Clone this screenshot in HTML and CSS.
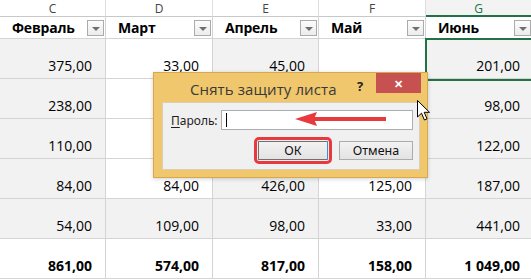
FILE: index.html
```html
<!DOCTYPE html>
<html lang="ru">
<head>
<meta charset="utf-8">
<title>Снять защиту листа</title>
<link rel="stylesheet" href="styles.css">
</head>
<body>
<div class="sheet">
  <div class="grid letters">
    <div class="cell">C</div>
    <div class="cell">D</div>
    <div class="cell">E</div>
    <div class="cell">F</div>
    <div class="cell sel">G</div>
  </div>
  <div class="grid head">
    <div class="cell"><span>Февраль</span><i class="filter"></i></div>
    <div class="cell"><span>Март</span><i class="filter"></i></div>
    <div class="cell"><span>Апрель</span><i class="filter"></i></div>
    <div class="cell"><span>Май</span><i class="filter"></i></div>
    <div class="cell"><span>Июнь</span><i class="filter"></i></div>
  </div>
  <div class="grid data">
    <div class="cell g">375,00</div><div class="cell">33,00</div><div class="cell g">45,00</div><div class="cell"></div><div class="cell g">201,00</div>
  </div>
  <div class="grid data">
    <div class="cell g">238,00</div><div class="cell"></div><div class="cell g"></div><div class="cell"></div><div class="cell g">98,00</div>
  </div>
  <div class="grid data">
    <div class="cell g">110,00</div><div class="cell"></div><div class="cell g"></div><div class="cell"></div><div class="cell g">122,00</div>
  </div>
  <div class="grid data">
    <div class="cell g">84,00</div><div class="cell">84,00</div><div class="cell g">426,00</div><div class="cell">125,00</div><div class="cell g">187,00</div>
  </div>
  <div class="grid data">
    <div class="cell g">54,00</div><div class="cell g">109,00</div><div class="cell g">98,00</div><div class="cell g">33,00</div><div class="cell g">441,00</div>
  </div>
  <div class="grid data total">
    <div class="cell">861,00</div><div class="cell">574,00</div><div class="cell">817,00</div><div class="cell">158,00</div><div class="cell">1 049,00</div>
  </div>

  <div class="selection"></div>

  <div class="dialog">
    <div class="titlebar">
      <span class="title">Снять защиту листа</span>
      <span class="help">?</span>
      <span class="close">✕</span>
    </div>
    <div class="panel">
      <div class="field">
        <label class="label"><u>П</u>ароль:</label>
        <div class="input"><i class="caret"></i></div>
      </div>
      <div class="buttons">
        <div class="btn ok">ОК</div>
        <div class="btn">Отмена</div>
      </div>
    </div>
  </div>

  <svg class="arrow" width="100" height="20" viewBox="0 0 100 20">
    <line x1="96" y1="10" x2="18" y2="10" stroke="#e8393f" stroke-width="4"/>
    <polygon points="5,10 27,3 24,10 27,17" fill="#e8393f"/>
  </svg>

  <svg class="cursor" width="14" height="22" viewBox="0 0 14 22">
    <path d="M0.5 0.5 L0.5 17 L4.5 13.2 L7.4 20 L10 18.9 L7.2 12.3 L12.5 12.3 Z" fill="#fff" stroke="#000" stroke-width="1" stroke-linejoin="miter"/>
  </svg>
</div>
</body>
</html>
```

FILE: styles.css
```css
* { box-sizing: border-box; }
html, body { margin: 0; padding: 0; background: #fff; }
body { width: 531px; height: 280px; overflow: hidden; font-family: "Open Sans", "Noto Sans", sans-serif; }

.sheet { position: relative; width: 531px; height: 280px; overflow: hidden; }

.grid {
  display: grid;
  grid-template-columns: 106px 107px 106px 107px 105px;
  width: 531px;
}
.cell { border-right: 1px solid #d4d4d4; border-bottom: 1px solid #d4d4d4; }
.grid .cell:last-child { border-right: 0; }

.letters { height: 17px; }
.letters .cell {
  display: flex; align-items: center; justify-content: center;
  font-size: 12px; color: #444; line-height: 15px;
  border-right-color: #dedede; border-bottom-color: #c8c8c8;
}
.letters .cell.sel {
  color: #217346; background: #f3f3f3;
  border-bottom-color: #217346;
  box-shadow: inset 0 -1px 0 #217346;
}

.head { height: 22px; }
.head .cell {
  display: flex; align-items: center; justify-content: space-between;
  padding: 0 1px 0 12px;
  font-weight: 700; font-size: 14px; color: #000;
}
.head .cell:last-child { padding-right: 0; }
.head .cell span { margin-top: -1px; letter-spacing: -0.2px; }
.filter {
  position: relative; flex: none;
  width: 17px; height: 16px; margin-top: 1px;
  border: 1px solid #ababab;
  background: linear-gradient(#fcfcfc, #ececec);
}
.filter::after {
  content: ""; position: absolute; left: 4px; top: 6px;
  border-top: 4px solid #6f6f6f; border-left: 4px solid transparent; border-right: 4px solid transparent;
}

.data { height: 40px; }
.data .cell {
  display: flex; align-items: flex-end; justify-content: flex-end;
  padding: 0 13px 3px 0;
  font-size: 14px; color: #000; line-height: 18px;
}
.data .cell:last-child { padding-right: 11px; }
.data .cell.g { background: #f2f2f2; }
.data.total .cell { font-weight: 700; }

.selection {
  position: absolute; left: 425px; top: 38px; width: 106px; height: 43px;
  border: 2px solid #217346; border-right: 0;
}

.dialog {
  position: absolute; left: 153px; top: 72px; width: 275px; height: 106px;
  background: #f0c76c; border: 1px solid #d6a94c;
  box-shadow: 0 1px 4px rgba(0,0,0,0.18);
  display: flex; flex-direction: column;
}
.titlebar { position: relative; height: 29px; display: flex; align-items: flex-start; }
.title {
  margin: 6px 0 0 36px;
  font-size: 15px; color: #3a3a3a; letter-spacing: 0.1px;
}
.help {
  position: absolute; left: 203px; top: 4px;
  font-size: 13px; font-weight: 700; color: #222;
}
.close {
  position: absolute; left: 222px; top: 0; width: 45px; height: 20px;
  background: #c75050; color: #fff;
  display: flex; align-items: center; justify-content: center;
  font-size: 11px; font-weight: 700;
}

.panel {
  margin: 0 7px 0 8px; height: 68px;
  background: #f0f0f0; border: 1px solid #d9cfb8;
  padding: 7px 6px 0 8px;
  display: flex; flex-direction: column; gap: 11px;
}
.field { display: flex; align-items: center; justify-content: space-between; }
.label { font-size: 12px; color: #1e1e1e; font-family: "Noto Sans", sans-serif; }
.label u { text-decoration-thickness: 1px; text-underline-offset: 2px; }
.input {
  position: relative; width: 192px; height: 20px;
  background: #fff; border: 1px solid #abadb3;
}
.caret { position: absolute; left: 4px; top: 2px; width: 1px; height: 14px; background: #000; }

.buttons { display: flex; justify-content: flex-end; gap: 11px; }
.btn {
  width: 74px; height: 19px;
  display: flex; align-items: center; justify-content: center;
  font-size: 12.5px; color: #111; font-family: "Noto Sans", sans-serif;
  background: linear-gradient(#f2f2f2, #e3e3e3);
  border: 1px solid #acacac;
}
.btn.ok {
  width: 70px;
  border-color: #707070 #3c8ee0 #707070 #707070;
  outline: 3px solid #e8393f; outline-offset: 1px; border-radius: 1px;
}

.arrow { position: absolute; left: 290px; top: 109px; }
.cursor { position: absolute; left: 417px; top: 100px; }
```
